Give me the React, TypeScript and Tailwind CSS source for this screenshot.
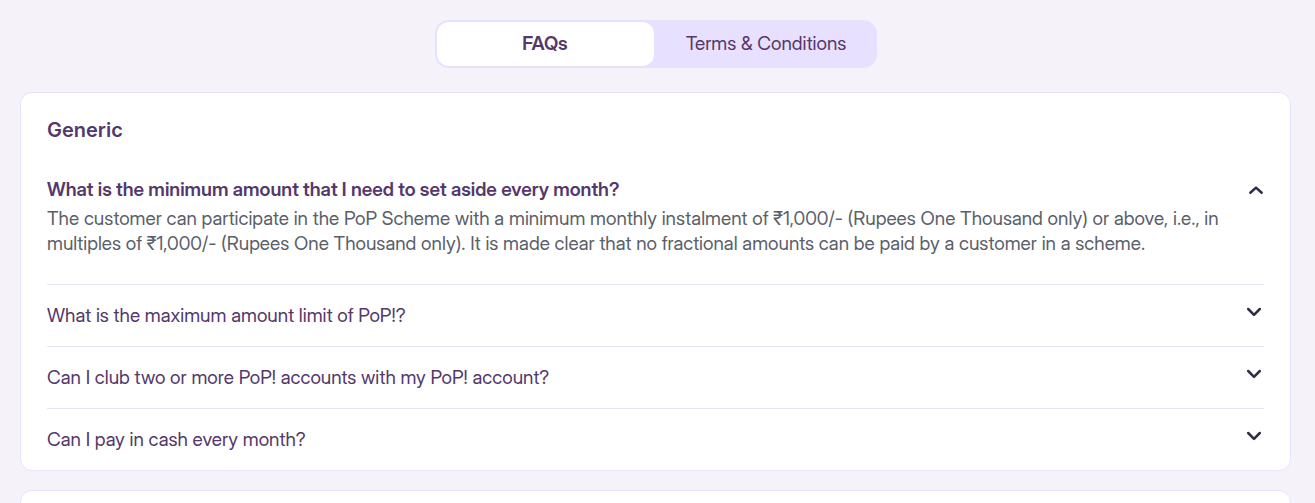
import { useState } from "react";

const items = [
  {
    q: "What is the minimum amount that I need to set aside every month?",
    a: "The customer can participate in the PoP Scheme with a minimum monthly instalment of ₹1,000/- (Rupees One Thousand only) or above, i.e., in multiples of ₹1,000/- (Rupees One Thousand only). It is made clear that no fractional amounts can be paid by a customer in a scheme.",
  },
  { q: "What is the maximum amount limit of PoP!?", a: "" },
  { q: "Can I club two or more PoP! accounts with my PoP! account?", a: "" },
  { q: "Can I pay in cash every month?", a: "" },
];

function Chevron({ up }: { up: boolean }) {
  return (
    <svg
      viewBox="0 0 16 10"
      className={up ? "h-[10px] w-4 shrink-0" : "mt-[3px] h-[10px] w-4 shrink-0"}
      fill="none"
      stroke="#332b45"
      strokeWidth="2.5"
      strokeLinecap="round"
      strokeLinejoin="round"
      aria-hidden="true"
    >
      <path d={up ? "M2.3 7.7 8 2.6l5.7 5.1" : "M2.2 2 8 7.8 13.8 2"} />
    </svg>
  );
}

export default function App() {
  const [open, setOpen] = useState(0);
  const [tab, setTab] = useState(0);
  return (
    <div className="h-screen overflow-y-auto bg-[#f5f3f9] [scrollbar-width:none]">
      <main className="pt-5 pr-6 pl-5 font-['Inter_Display','Inter',sans-serif] text-[19px] text-[#54386b]">
        <div className="mx-auto flex h-12 max-w-[442px] gap-1 rounded-[14px] bg-[#e8e0ff] p-[2px]">
          {["FAQs", "Terms & Conditions"].map((label, i) => (
            <button
              key={label}
              onClick={() => setTab(i)}
              className={tab === i ? "flex-1 rounded-xl bg-white font-semibold" : "flex-1 rounded-xl"}
            >
              {label}
            </button>
          ))}
        </div>
        <section className="mt-6 rounded-xl border border-[#e8e3fc] bg-white px-[26px] pt-[25px]">
          <h2 className="font-['Inter',sans-serif] text-[20px] leading-6 font-semibold">Generic</h2>
          <div className="mt-6">
            {items.map((item, i) => {
              const isOpen = open === i;
              return (
                <div key={item.q} className={i < items.length - 1 ? "border-b border-[#e8e5f5]" : ""}>
                  <button
                    aria-expanded={isOpen}
                    onClick={() => setOpen(isOpen ? -1 : i)}
                    className={
                      isOpen
                        ? "flex w-full items-center justify-between pt-3 pb-1 text-left leading-6 font-semibold"
                        : "flex w-full items-start justify-between pt-[19px] pr-[2px] pb-[18px] text-left leading-6"
                    }
                  >
                    {item.q}
                    <Chevron up={isOpen} />
                  </button>
                  {isOpen && <p className="pr-8 pb-7 leading-[25px] text-[#5b5f6b]">{item.a}</p>}
                </div>
              );
            })}
          </div>
        </section>
        <section className="mt-[19px] h-24 rounded-xl border border-[#e8e3fc] bg-white" />
      </main>
    </div>
  );
}
